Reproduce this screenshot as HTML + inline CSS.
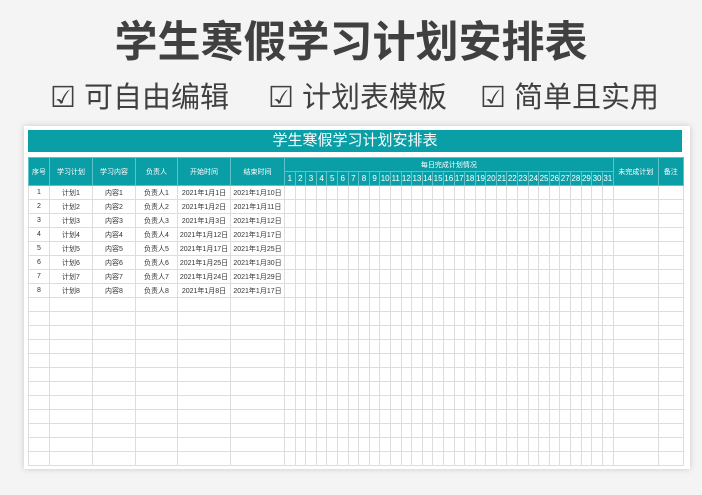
<!DOCTYPE html>
<html><head><meta charset="utf-8"><style>
*{margin:0;padding:0;box-sizing:border-box}
body{width:702px;height:495px;background:#f4f4f4;font-family:"Liberation Sans","Noto Sans CJK SC",sans-serif;position:relative;overflow:hidden}
.t{position:absolute;left:0;width:702px;top:15px;text-align:center;font-size:43px;font-weight:bold;color:#404040;line-height:56px;letter-spacing:0}
.s{position:absolute;top:80px;font-size:29px;color:#404040;line-height:36px}
.panel{position:absolute;left:24px;top:126px;width:666px;height:343px;background:#fff;box-shadow:0 0 6px rgba(0,0,0,.18)}
.ban{position:absolute;left:28px;top:130px;width:654px;height:22px;background:#0a9ea6;color:#fff;font-size:15px;text-align:center;line-height:22px}
table{position:absolute;left:28px;top:157px;border-collapse:collapse;table-layout:fixed;width:654px}
td{border:1px solid #ddd;font-size:7px;text-align:center;height:14px;padding:0;color:#333;overflow:hidden;white-space:nowrap}
.h td{background:#0a9ea6;color:#fff;border-color:#5cc4c9}
.h2 td{font-size:8px}
</style></head><body>
<div class="t">学生寒假学习计划安排表</div>
<div class="s" style="left:50px">☑ 可自由编辑</div>
<div class="s" style="left:268px">☑ 计划表模板</div>
<div class="s" style="left:480px">☑ 简单且实用</div>
<div class="panel"></div>
<div class="ban">学生寒假学习计划安排表</div>
<table>
<colgroup><col style="width:21px"><col style="width:43px"><col style="width:43px"><col style="width:42px"><col style="width:53px"><col style="width:54px">
<col span="31" style="width:10.6px"><col style="width:45px"><col style="width:25px"></colgroup>
<tr class="h"><td rowspan="2">序号</td><td rowspan="2">学习计划</td><td rowspan="2">学习内容</td><td rowspan="2">负责人</td><td rowspan="2">开始时间</td><td rowspan="2">结束时间</td><td colspan="31">每日完成计划情况</td><td rowspan="2">未完成计划</td><td rowspan="2">备注</td></tr>
<tr class="h h2"><td>1</td><td>2</td><td>3</td><td>4</td><td>5</td><td>6</td><td>7</td><td>8</td><td>9</td><td>10</td><td>11</td><td>12</td><td>13</td><td>14</td><td>15</td><td>16</td><td>17</td><td>18</td><td>19</td><td>20</td><td>21</td><td>22</td><td>23</td><td>24</td><td>25</td><td>26</td><td>27</td><td>28</td><td>29</td><td>30</td><td>31</td></tr>
<script>
var d=[["2021年1月1日","2021年1月10日"],["2021年1月2日","2021年1月11日"],["2021年1月3日","2021年1月12日"],["2021年1月12日","2021年1月17日"],["2021年1月17日","2021年1月25日"],["2021年1月25日","2021年1月30日"],["2021年1月24日","2021年1月29日"],["2021年1月8日","2021年1月17日"]];
var e="";for(var k=0;k<33;k++)e+="<td></td>";
for(var i=0;i<20;i++){if(i<8){var n=i+1;document.write("<tr><td>"+n+"</td><td>计划"+n+"</td><td>内容"+n+"</td><td>负责人"+n+"</td><td>"+d[i][0]+"</td><td>"+d[i][1]+"</td>"+e+"</tr>");}else document.write("<tr><td></td><td></td><td></td><td></td><td></td><td></td>"+e+"</tr>");}
</script>
</table>
</body></html>
